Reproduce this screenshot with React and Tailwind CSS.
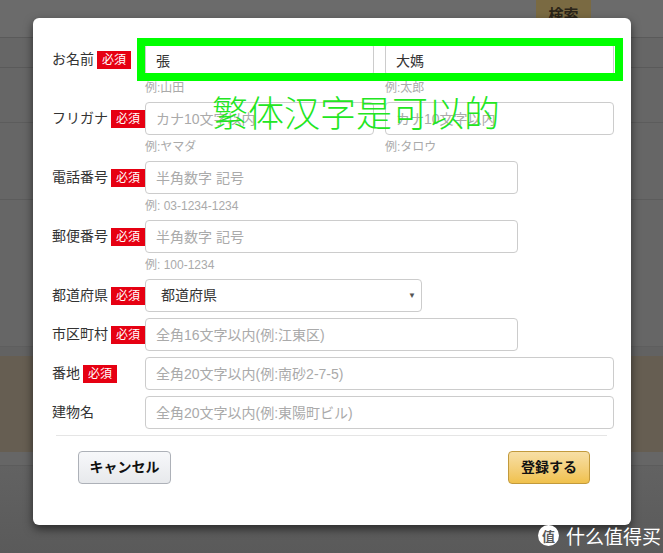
import React from "react";

const jp = "font-['Liberation_Sans','Noto_Sans_CJK_JP',sans-serif]";

function Badge() {
  return (
    <span className="ml-[3px] inline-block h-[18px] bg-[#e60012] px-[5px] text-[12px] leading-[18px] text-white">
      必須
    </span>
  );
}

function Field({ placeholder, value, className = "" }) {
  return (
    <input
      type="text"
      readOnly
      defaultValue={value}
      placeholder={placeholder}
      className={`h-[33px] rounded-[4px] border border-[#ccc] bg-white px-[10px] text-[14px] text-[#333] outline-none placeholder:text-[#aaa] ${className}`}
    />
  );
}

function Row({ label, required, example, children }) {
  return (
    <div className="mb-[6px] flex">
      <div className="flex h-[33px] w-[93px] shrink-0 items-center text-[14px] text-[#333]">
        <span>{label}</span>
        {required && <Badge />}
      </div>
      <div className="flex-1">
        {children}
        {example && (
          <div className="flex h-[20px] pt-[4px] text-[12px] leading-[16px] text-[#aaa]">
            {example}
          </div>
        )}
      </div>
    </div>
  );
}

function Background() {
  return (
    <div className="flex h-[553px] w-full flex-col bg-[#666]">
      <div className="flex h-[38px] shrink-0 border-b border-[#5a5a5a] bg-[#6b6b6b]">
        <div className="ml-[536px] flex h-[30px] w-[55px] justify-center bg-[#7a6a42] pt-[4px] text-[15px] font-bold text-[#2a2418]">
          検索
        </div>
      </div>
      <div className="h-[30px] shrink-0 border-b border-[#5a5a5a]" />
      <div className="h-[55px] shrink-0 border-b border-[#5c5c5c]" />
      <div className="h-[77px] shrink-0 border-b border-[#5c5c5c]" />
      <div className="h-[147px] shrink-0 border-b border-[#5e5e5e]" />
      <div className="h-[9px] shrink-0 bg-[#626262]" />
      <div className="h-[96px] shrink-0 bg-[#665e52]" />
      <div className="h-[14px] shrink-0 border-b border-[#5c5c5c]" />
      <div className="flex-1 bg-gradient-to-b from-[#626262] to-[#5a5a5a]" />
    </div>
  );
}

export default function App() {
  return (
    <div className={`relative h-[553px] w-[663px] overflow-hidden ${jp}`}>
      <Background />

      <div className="absolute left-[33px] top-[18px] h-[507px] w-[598px] rounded-[6px] bg-white shadow-[0_4px_10px_rgba(0,0,0,0.55)]">
        <div className="pl-[19px] pr-[17px] pt-[25px]">
          <Row
            label="お名前"
            required
            example={
              <>
                <span className="w-[240px]">例:山田</span>
                <span>例:太郎</span>
              </>
            }
          >
            <div className="flex gap-[11px]">
              <Field value="張" className="w-[229px]" />
              <Field value="大媽" className="w-[229px]" />
            </div>
          </Row>
          <Row
            label="フリガナ"
            required
            example={
              <>
                <span className="w-[240px]">例:ヤマダ</span>
                <span>例:タロウ</span>
              </>
            }
          >
            <div className="flex gap-[11px]">
              <Field placeholder="カナ10文字以内" className="w-[229px]" />
              <Field placeholder="カナ10文字以内" className="w-[229px]" />
            </div>
          </Row>
          <Row label="電話番号" required example="例: 03-1234-1234">
            <Field placeholder="半角数字 記号" className="w-[373px]" />
          </Row>
          <Row label="郵便番号" required example="例: 100-1234">
            <Field placeholder="半角数字 記号" className="w-[373px]" />
          </Row>
          <Row label="都道府県" required>
            <div className="relative flex h-[33px] w-[277px] items-center rounded-[4px] border border-[#ccc] pl-[15px] text-[14px] text-[#333]">
              都道府県
              <span className="absolute right-[5px] top-[12px] text-[8px] leading-[8px] text-[#555]">▼</span>
            </div>
          </Row>
          <Row label="市区町村" required>
            <Field placeholder="全角16文字以内(例:江東区)" className="w-[373px]" />
          </Row>
          <Row label="番地" required>
            <Field placeholder="全角20文字以内(例:南砂2-7-5)" className="w-[469px]" />
          </Row>
          <Row label="建物名">
            <Field placeholder="全角20文字以内(例:東陽町ビル)" className="w-[469px]" />
          </Row>
        </div>

        <div className="ml-[23px] mr-[24px] border-t border-[#e5e5e5]" />

        <div className="mt-[15px] flex justify-between pl-[45px] pr-[41px]">
          <button className="h-[33px] w-[93px] rounded-[4px] border border-[#adb1b8] bg-gradient-to-b from-[#f7f8fa] to-[#e7e9ec] text-[14px] font-bold text-[#111]">
            キャンセル
          </button>
          <button className="h-[33px] w-[82px] rounded-[4px] border border-[#c29a3c] bg-gradient-to-b from-[#f7dfa5] to-[#f0c14b] text-[14px] font-bold text-[#111]">
            登録する
          </button>
        </div>

        <div className="pointer-events-none absolute left-[104px] top-[20px] h-[43px] w-[486px] border-[8px] border-[#00ff00]" />

        <div className="pointer-events-none absolute left-[179px] top-[75px] font-['Noto_Sans_CJK_SC',sans-serif] text-[36px] font-light leading-[36px] text-[#22e622]">
          繁体汉字是可以的
        </div>
      </div>

      <div className="absolute left-[538px] top-[525px] flex items-center gap-[7px] font-['Noto_Sans_CJK_SC',sans-serif] text-white">
        <span className="flex h-[21px] w-[21px] items-center justify-center rounded-full bg-white text-[13px] font-bold leading-none text-[#5a5a5a]">
          值
        </span>
        <span className="text-[19px] leading-[21px]">什么值得买</span>
      </div>
    </div>
  );
}
